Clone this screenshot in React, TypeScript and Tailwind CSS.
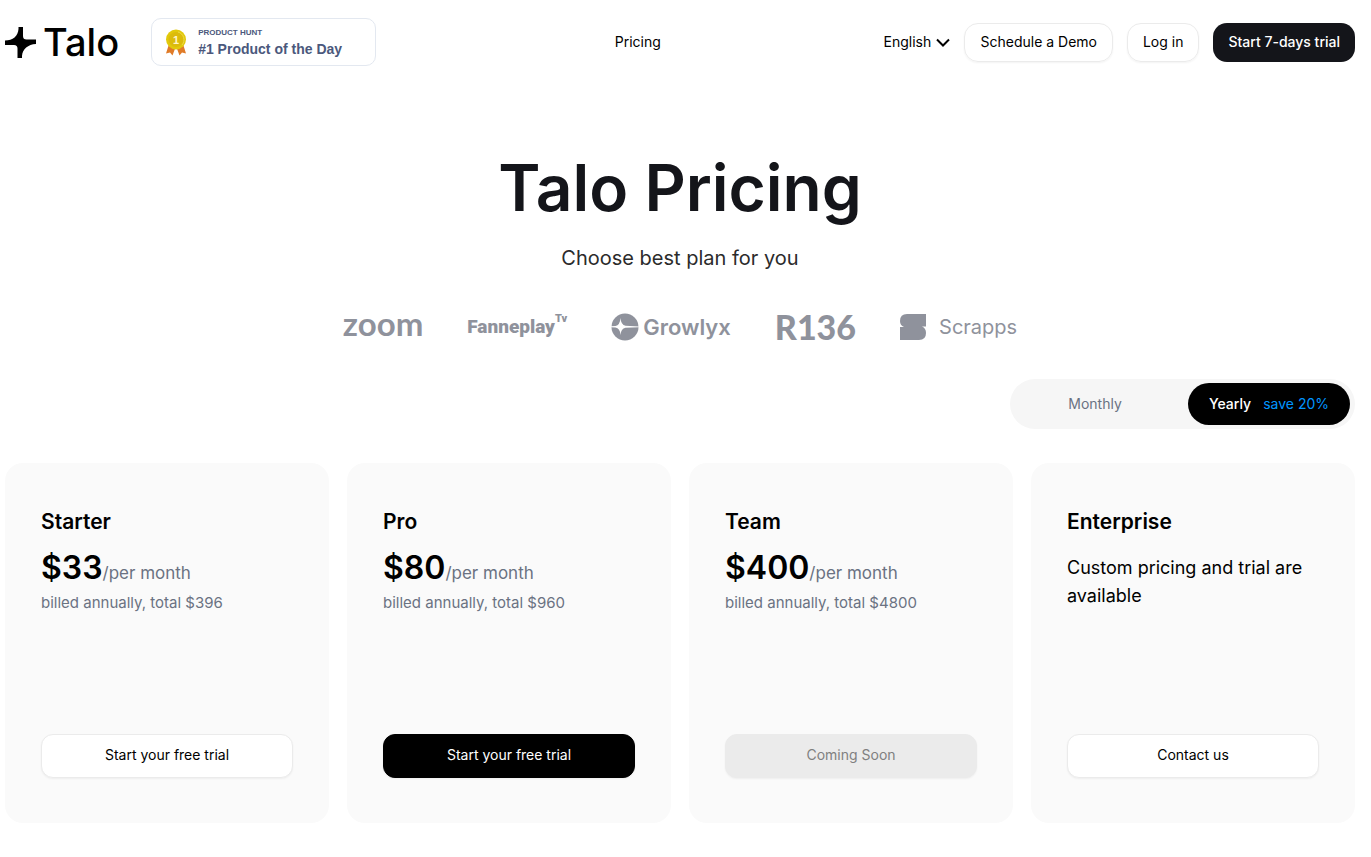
import { ReactNode, useState } from 'react';
import clsx from 'clsx';

type Billing = 'monthly' | 'yearly';

interface IPlan {
    name: string,
    monthly?: number,
    yearly?: number,
    description?: string,
    action: string,
    variant: 'light' | 'dark' | 'disabled',
}

const plans: IPlan[] = [
    { name: 'Starter', monthly: 41, yearly: 33, action: 'Start your free trial', variant: 'light' },
    { name: 'Pro', monthly: 100, yearly: 80, action: 'Start your free trial', variant: 'dark' },
    { name: 'Team', monthly: 500, yearly: 400, action: 'Coming Soon', variant: 'disabled' },
    { name: 'Enterprise', description: 'Custom pricing and trial are available', action: 'Contact us', variant: 'light' },
];

function TaloLogo() {
    return (
        <a href="#" className="flex items-center gap-[7px]">
            <svg width="31" height="31" viewBox="0 0 31 31" aria-hidden="true">
                <path d="M13.5 0H18V9Q18 12.5 21.5 12.5H31V17C23 17.5 17.5 22 17 29V31H12.5V21.5Q12.5 18 9 18H0V13.5C8 13.5 13 9 13.5 2Z" />
            </svg>
            <span className="text-[38px] leading-10 font-medium">Talo</span>
        </a>
    );
}

function Medal() {
    return (
        <svg width="22" height="27" viewBox="0 0 22 27" aria-hidden="true">
            <path d="M4 15L1 24.5L5 23.5L7.5 26.5L11 17L14.5 26.5L17 23.5L21 24.5L18 15Z" fill="#e07b28" />
            <circle cx="11" cy="10.5" r="10" fill="#e2c90a" />
            <circle cx="11" cy="10.5" r="7.5" fill="#dcbb0b" />
            <path d="M13 3A8 8 0 0 1 17 16" fill="none" stroke="#ecd94a" strokeWidth="1" />
            <text x="11" y="14.5" textAnchor="middle" fontSize="11" fontWeight="700" fill="#fff6c8" className="font-['Liberation_Sans',sans-serif]">1</text>
        </svg>
    );
}

function ProductHuntBadge() {
    return (
        <a href="#" className="flex h-12 w-[225px] items-center gap-[11px] rounded-[10px] border border-[#e3e8f0] pl-[13px] font-['Liberation_Sans',sans-serif] font-bold text-[#4b587c]">
            <Medal />
            <span className="pt-[2px]">
                <span className="block text-[8px] leading-3">PRODUCT HUNT</span>
                <span className="block text-sm leading-5">#1 Product of the Day</span>
            </span>
        </a>
    );
}

function Header() {
    return (
        <header className="flex items-center justify-between pt-[18px] text-sm">
            <div className="flex items-center gap-8 pr-4">
                <TaloLogo />
                <ProductHuntBadge />
            </div>
            <nav>
                <a href="#">Pricing</a>
            </nav>
            <div className="flex items-center gap-[14px]">
                <div className="flex items-center gap-[5px]">
                    <select aria-label="Language" className="h-8 appearance-none bg-transparent leading-6">
                        <option>English</option>
                    </select>
                    <svg width="14" height="9" viewBox="0 0 14 9" fill="none" stroke="currentColor" strokeWidth="2" aria-hidden="true">
                        <path d="M1 1.5L7 7.5L13 1.5" />
                    </svg>
                </div>
                <a href="#" className="flex h-[39px] items-center rounded-[14px] border border-[#ebebeb] px-[15px] shadow-xs">Schedule a Demo</a>
                <a href="#" className="flex h-[39px] items-center rounded-[14px] border border-[#ebebeb] px-[15px] shadow-xs">Log in</a>
                <a href="#" className="flex h-[39px] items-center rounded-[14px] bg-[#14151a] px-[15px] font-medium text-white">Start 7-days trial</a>
            </div>
        </header>
    );
}

function CustomerLogos() {
    return (
        <ul className="mt-[33px] flex h-10 items-center justify-center gap-[44px] text-[#8f929c]">
            <li className="pb-2 font-['Lato',sans-serif] text-[33px] leading-8 font-bold">zoom</li>
            <li className="flex items-start font-['Roboto',sans-serif] font-black">
                <span className="text-[19px] leading-8">Fanneplay</span>
                <span className="text-[11px] leading-4">Tv</span>
            </li>
            <li className="flex items-center gap-1 text-[22px] font-semibold">
                <svg width="28" height="28" viewBox="0 0 28 28" aria-hidden="true">
                    <circle cx="14" cy="14" r="13.5" fill="currentColor" />
                    <path d="M9.5 5Q10 12 14.5 12.7L28 13.4V14.2L14.5 14.8Q10 15.5 9.5 22Q9 15 4.5 14.5L0 14.2V13.3L4.5 13Q9 12 9.5 5Z" fill="#fff" />
                </svg>
                <span>Growlyx</span>
            </li>
            <li className="font-['Lato',sans-serif] text-[34px] leading-8 font-black">R136</li>
            <li className="flex items-center gap-3 text-xl">
                <svg width="27" height="26" viewBox="0 0 27 26" fill="currentColor" aria-hidden="true">
                    <path d="M7 0H26V12.5H22Q26 14 26 19Q26 26 19 26H0V13H4Q0 11.5 0 7Q0 0 7 0Z" />
                </svg>
                <span>Scrapps</span>
            </li>
        </ul>
    );
}

interface BillingToggleProps {
    billing: Billing;
    onChange: (billing: Billing) => void;
}

function BillingToggle({ billing, onChange }: BillingToggleProps) {
    const itemClass = (active: boolean) => clsx(
        'flex flex-1 items-center justify-center gap-3 rounded-full text-sm',
        active ? 'bg-black text-white' : 'text-gray-500',
    );

    return (
        <div className="mt-8 flex justify-end">
            <div className="flex h-[50px] w-[345px] gap-3 rounded-full bg-[#f6f6f6] p-1 pr-[5px]">
                <button type="button" aria-pressed={billing === 'monthly'} onClick={() => onChange('monthly')} className={itemClass(billing === 'monthly')}>
                    Monthly
                </button>
                <button type="button" aria-pressed={billing === 'yearly'} onClick={() => onChange('yearly')} className={itemClass(billing === 'yearly')}>
                    <span className="font-medium">Yearly</span>
                    <span className="text-[#0095ff]">save 20%</span>
                </button>
            </div>
        </div>
    );
}

function PlanCard({ plan, billing }: { plan: IPlan, billing: Billing }) {
    const price = billing === 'yearly' ? plan.yearly : plan.monthly;
    let details: ReactNode = <p className="mt-4 text-lg leading-7">{plan.description}</p>;

    if (price) {
        details = (
            <>
                <p className="mt-2 flex h-11 items-baseline leading-[44px]">
                    <span className="text-[32px] font-semibold">${price}</span>
                    <span className="text-[17px] text-gray-500">/per month</span>
                </p>
                <p className="mt-px text-[15px] leading-6 text-gray-500">
                    {billing === 'yearly' ? `billed annually, total $${price * 12}` : 'billed monthly'}
                </p>
            </>
        );
    }

    return (
        <li className="flex min-h-[360px] flex-col rounded-[18px] bg-[#fafafa] px-9 pt-[43px] pb-[45px]">
            <h2 className="text-[21px] leading-8 font-semibold">{plan.name}</h2>
            {details}
            <button
                type="button"
                disabled={plan.variant === 'disabled'}
                className={clsx(
                    'mt-auto h-11 rounded-xl border pb-[2px] text-sm shadow-xs',
                    plan.variant === 'light' && 'border-[#ebebeb] bg-white',
                    plan.variant === 'dark' && 'border-black bg-black text-white',
                    plan.variant === 'disabled' && 'border-[#ebebeb] bg-[#ebebeb] text-[#808080]',
                )}
            >
                {plan.action}
            </button>
        </li>
    );
}

export default function App() {
    const [billing, setBilling] = useState<Billing>('yearly');

    return (
        <div className="min-h-screen bg-white pr-4 pl-[5px] font-['Inter',sans-serif] text-black">
            <Header />
            <main className="pb-8">
                <section className="pt-20 text-center">
                    <h1 className="text-[64px] leading-[84px] font-semibold text-[#14151a]">Talo Pricing</h1>
                    <p className="mt-3 text-xl leading-8 text-[#2b2b2b]">Choose best plan for you</p>
                    <CustomerLogos />
                </section>
                <BillingToggle billing={billing} onChange={setBilling} />
                <ul className="mt-[34px] grid grid-cols-4 gap-[18px]">
                    {plans.map((plan) => (
                        <PlanCard key={plan.name} plan={plan} billing={billing} />
                    ))}
                </ul>
            </main>
        </div>
    );
}
